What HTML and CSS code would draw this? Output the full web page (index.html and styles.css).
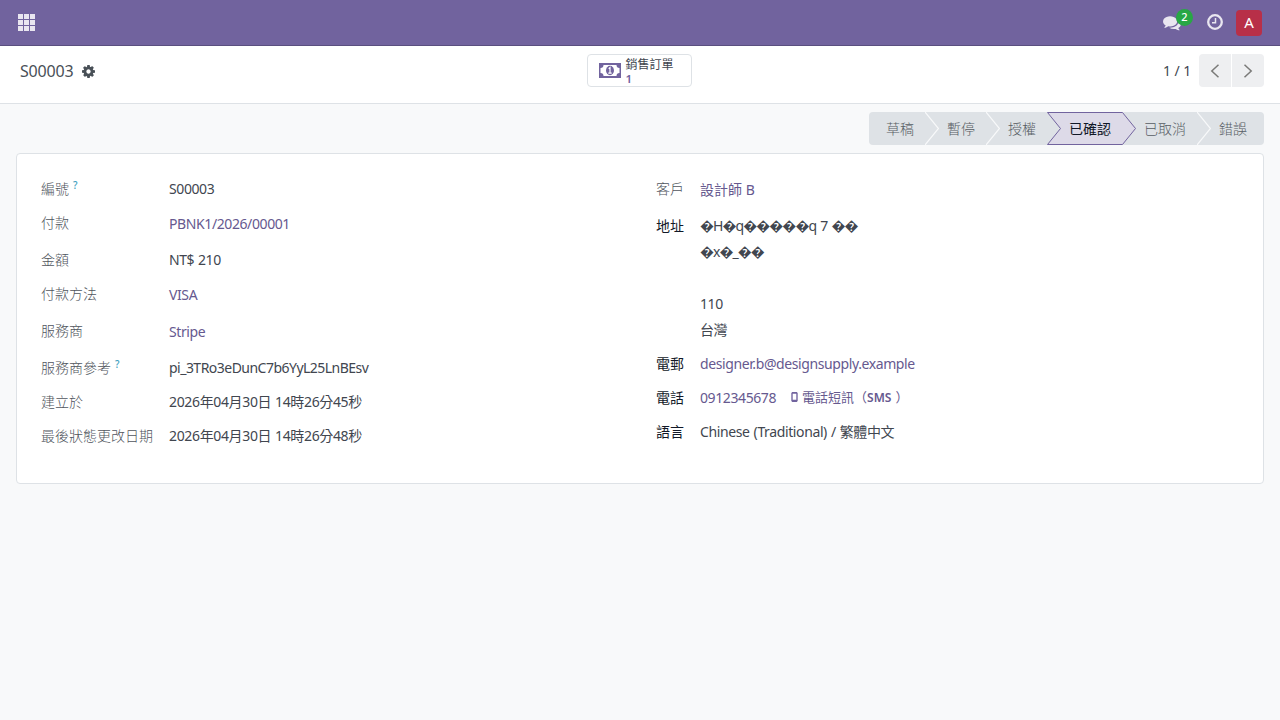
FILE: index.html
```html
<!DOCTYPE html>
<html lang="zh-TW">

<head>
    <meta charset="UTF-8">
    <meta name="viewport" content="width=device-width, initial-scale=1.0">
    <title>S00003</title>
    <link rel="stylesheet" href="styles.css">
</head>

<body>
    <header class="navbar">
        <svg class="apps" width="17" height="17" viewBox="0 0 17 17" fill="#e9e6f0">
            <path d="M0 0h5v5H0zM6 0h5v5H6zM12 0h5v5h-5zM0 6h5v5H0zM6 6h5v5H6zM12 6h5v5h-5zM0 12h5v5H0zM6 12h5v5H6zM12 12h5v5h-5z"/>
        </svg>
        <div class="systray">
            <div class="messages">
                <svg width="18" height="16" viewBox="0 0 1792 1600" fill="#e9e6f0">
                    <path d="M1408 640q0 139-94 257t-256.500 186.500-353.500 68.500q-86 0-176-16-124 88-278 128-36 9-86 16h-3q-11 0-20.500-8t-11.500-21q-1-3-1-6.500t.5-6.500 2-6l2.500-5 3.500-5.500 4-5 4.500-5 4-4.500q5-6 23-25t26-29.500 22.500-29 25-38.500 20.500-44q-124-72-195-177t-71-224q0-139 94-257t256.500-186.500 353.500-68.500 353.500 68.500 256.500 186.500 94 257zm384 256q0 120-71 224.500t-195 176.500q10 24 20.500 44t25 38.500 22.500 29 26 29.500 23 25q1 1 4 4.500t4.500 5 4 5 3.500 5.500l2.500 5 2 6 .5 6.500-1 6.500q-3 14-13 22t-22 7q-50-7-86-16-154-40-278-128-90 16-176 16-271 0-472-132 58 4 88 4 161 0 309-45t264-129q125-92 192-212t67-254q0-77-23-152 129 71 204 178t75 230z"/>
                </svg>
                <span class="badge">2</span>
            </div>
            <svg class="clock" width="16" height="16" viewBox="0 0 16 16" fill="none" stroke="#e9e6f0">
                <circle cx="8" cy="8" r="6.800" stroke-width="2.300"/>
                <path d="M8.500 4v4.700H5" stroke-width="1.500"/>
            </svg>
            <span class="avatar">A</span>
        </div>
    </header>

    <div class="control-panel">
        <div class="breadcrumb">
            <span>S00003</span>
            <svg width="13" height="13" viewBox="0 0 1536 1536" fill="#495057">
                <path d="M1024 768q0-106-75-181t-181-75-181 75-75 181 75 181 181 75 181-75 75-181zm512-109v222q0 12-8 23t-20 13l-185 28q-19 54-39 91 35 50 107 138 10 12 10 25t-9 23q-27 37-99 108t-94 71q-12 0-26-9l-138-108q-44 23-91 38-16 136-29 186-7 28-36 28h-222q-14 0-24.500-8.500t-11.500-21.500l-28-184q-49-16-90-37l-141 107q-10 9-25 9-14 0-25-11-126-114-165-168-7-10-7-23 0-12 8-23 15-21 51-66.500t54-70.500q-27-50-41-99l-183-27q-13-2-21-12.500t-8-23.500v-222q0-12 8-23t19-13l186-28q14-46 39-92-40-57-107-138-10-12-10-24 0-10 9-23 26-36 98.500-107.500t94.500-71.500q13 0 26 10l138 107q44-23 91-38 16-136 29-186 7-28 36-28h222q14 0 24.500 8.500t11.500 21.500l28 184q49 16 90 37l142-107q9-9 24-9 13 0 25 10 129 119 165 170 7 8 7 22 0 12-8 23-15 21-51 66.500t-54 70.500q26 50 41 98l183 28q13 2 21 12.500t8 23.500z"/>
            </svg>
        </div>
        <button class="stat-button">
            <svg width="22" height="15" viewBox="0 0 22 15">
                <path fill="#71639e" fill-rule="evenodd" d="M0 0h22v15H0zM4.500 2a3 3 0 0 1-3 3v5a3 3 0 0 1 3 3h13a3 3 0 0 1 3-3V5a3 3 0 0 1-3-3z"/>
                <ellipse cx="11" cy="7.500" rx="4" ry="4.700" fill="#71639e"/>
                <path d="M9.700 5.800l1.300-1.200v5.200M9.300 10.100h3.400" fill="none" stroke="#fff" stroke-width="1.200"/>
            </svg>
            <span class="stat-text"><span>銷售訂單</span><b>1</b></span>
        </button>
        <div class="pager">
            <span>1 / 1</span>
            <div class="pager-buttons">
                <button><svg width="10" height="14" viewBox="0 0 10 14"><path d="M8.500 .8L1.800 7l6.700 6.200"/></svg></button>
                <button><svg width="10" height="14" viewBox="0 0 10 14"><path d="M1.500 .8L8.200 7l-6.700 6.200"/></svg></button>
            </div>
        </div>
    </div>

    <main class="content">
        <div class="statusbar">
            <span class="step first">草稿</span>
            <svg class="arrow" viewBox="0 0 14 33"><path class="seam" d="M0 0l13.500 16.500L0 33"/></svg>
            <span class="step">暫停</span>
            <svg class="arrow" viewBox="0 0 14 33"><path class="seam" d="M0 0l13.500 16.500L0 33"/></svg>
            <span class="step">授權</span>
            <svg class="arrow" viewBox="0 0 14 33"><path class="fill" d="M0 0h14v33H0l13.500-16.500z"/><path class="edge" d="M14 .5H.5l13 16L.5 32.500H14"/></svg>
            <span class="step active">已確認</span>
            <svg class="arrow" viewBox="0 0 14 33"><path class="fill" d="M0 0l13.500 16.500L0 33z"/><path class="edge" d="M0 .5h.5l13 16-13 16H0"/></svg>
            <span class="step">已取消</span>
            <svg class="arrow" viewBox="0 0 14 33"><path class="seam" d="M0 0l13.500 16.500L0 33"/></svg>
            <span class="step last">錯誤</span>
        </div>

        <div class="sheet">
            <div class="group group-left">
                <label>編號<sup>?</sup></label>
                <span>S00003</span>
                <label class="up">付款</label>
                <a href="#">PBNK1/2026/00001</a>
                <label>金額</label>
                <span>NT$ 210</span>
                <label class="up">付款方法</label>
                <a href="#">VISA</a>
                <label>服務商</label>
                <a href="#" class="down">Stripe</a>
                <label>服務商參考<sup>?</sup></label>
                <span class="reference">pi_3TRo3eDunC7b6YyL25LnBEsv</span>
                <label>建立於</label>
                <span class="date">2026年04月30日 14時26分45秒</span>
                <label>最後狀態更改日期</label>
                <span class="date">2026年04月30日 14時26分48秒</span>
            </div>
            <div class="group group-right">
                <label class="up">客戶</label>
                <a href="#" class="partner">設計師 B</a>
                <label class="dark top">地址</label>
                <div class="address">
                    <div class="garbled">�H�q�����q 7 ��</div>
                    <div class="garbled">�x�_��</div>
                    <div></div>
                    <div>110</div>
                    <div>台灣</div>
                </div>
                <label class="dark">電郵</label>
                <a href="#">designer.b@designsupply.example</a>
                <label class="dark">電話</label>
                <div class="phone">
                    <a href="#">0912345678</a>
                    <a href="#" class="sms">
                        <svg width="7" height="10" viewBox="0 0 7 11"><path fill="#71639e" fill-rule="evenodd" d="M1 0h5l1 1v9l-1 1H1l-1-1V1zM1.500 1.800v6.700h4V1.800z"/></svg>
                        <span>電話短訊（<b>SMS</b>）</span>
                    </a>
                </div>
                <label class="dark">語言</label>
                <span class="language">Chinese (Traditional) / 繁體中文</span>
            </div>
        </div>
    </main>
</body>

</html>
```
FILE: styles.css
```css
* {
    box-sizing: border-box;
}

body {
    margin: 0;
    height: 100vh;
    background-color: #f8f9fa;
    color: #41464f;
    font-family: 'Noto Sans', 'Noto Sans CJK TC', sans-serif;
    font-size: 14px;
    line-height: 21px;
    letter-spacing: -0.4px;
    word-spacing: 0.5px;
}

a {
    color: #66598f;
    text-decoration: none;
}

button {
    font: inherit;
    letter-spacing: inherit;
    color: inherit;
    padding: 0;
    cursor: pointer;
}

svg {
    flex: none;
    display: block;
}

.navbar {
    height: 46px;
    padding: 0 18px;
    display: flex;
    align-items: center;
    justify-content: space-between;
    background-color: #71639e;
    border-bottom: 1px solid #5a4f7f;
}

.systray {
    display: flex;
    align-items: center;
}

.messages {
    position: relative;
    margin-right: 26px;
}

.badge {
    position: absolute;
    left: 13px;
    top: -6px;
    width: 17px;
    height: 17px;
    border-radius: 50%;
    background-color: #28a745;
    color: #fff;
    font-size: 11px;
    font-weight: 500;
    line-height: 16px;
    letter-spacing: 0;
    text-align: center;
}

.clock {
    margin-top: -2px;
    margin-right: 13px;
}

.avatar {
    width: 26px;
    height: 26px;
    border-radius: 4px;
    background-color: #b82f48;
    color: #fff;
    font-size: 15px;
    line-height: 25px;
    letter-spacing: 0;
    text-align: center;
}

.control-panel {
    height: 58px;
    padding: 8px 16px 16px 20px;
    display: grid;
    grid-template-columns: 1fr 105px 1fr;
    background-color: #fff;
    border-bottom: 1px solid #dee2e6;
}

.breadcrumb {
    display: flex;
    align-items: center;
    gap: 9px;
    padding-top: 1px;
    font-size: 16px;
    letter-spacing: -0.2px;
    color: #495057;
}

.stat-button {
    width: 105px;
    height: 33px;
    padding-left: 11px;
    display: flex;
    align-items: center;
    gap: 5px;
    background-color: #fff;
    border: 1px solid #dee2e6;
    border-radius: 4px;
    margin-left: -3px;
}

.stat-text {
    display: flex;
    flex-direction: column;
    padding-top: 2px;
    font-size: 12px;
    line-height: 14px;
    letter-spacing: 0;
    text-align: left;
}

.stat-text b {
    font-size: 11.5px;
    font-weight: 600;
    color: #71639e;
}

.pager {
    display: flex;
    align-items: center;
    justify-content: flex-end;
    gap: 8px;
    letter-spacing: -0.3px;
}

.pager-buttons {
    display: flex;
    gap: 1px;
}

.pager-buttons button {
    width: 32px;
    height: 33px;
    display: flex;
    align-items: center;
    justify-content: center;
    border: 0;
    background-color: #eeeff1;
}

.pager-buttons button:first-child {
    border-radius: 4px 0 0 4px;
}

.pager-buttons button:last-child {
    border-radius: 0 4px 4px 0;
}

.pager-buttons path {
    fill: none;
    stroke: #7a7a78;
    stroke-width: 1.5;
}

.content {
    padding: 8px 16px;
}

.statusbar {
    width: 395px;
    height: 33px;
    margin-left: auto;
    display: flex;
    background-color: #dee2e6;
    border-radius: 4px;
    color: #565c63;
    font-weight: 300;
    letter-spacing: 0;
}

.step {
    flex: 0 0 47px;
    height: 33px;
    padding-left: 8px;
    line-height: 33px;
    white-space: nowrap;
}

.step.first {
    flex-basis: 56px;
    padding-left: 17px;
}

.step.active {
    flex-basis: 61px;
    background-color: #dddae8;
    border: solid #71639e;
    border-width: 1px 0;
    line-height: 31px;
    font-weight: 400;
    color: #111827;
}

.step.active ~ .step {
    flex-basis: 61px;
}

.step.last {
    flex: 1;
}

.arrow {
    width: 14px;
    height: 33px;
}

.arrow .seam {
    fill: none;
    stroke: #f8f9fa;
    stroke-width: 1.2;
}

.arrow .fill {
    fill: #dddae8;
}

.arrow .edge {
    fill: none;
    stroke: #71639e;
    stroke-width: 1;
}

.sheet {
    height: 331px;
    margin-top: 8px;
    padding: 17px 24px;
    display: grid;
    grid-template-columns: 615px 1fr;
    background-color: #fff;
    border: 1px solid #dee2e6;
    border-radius: 4px;
}

.group {
    display: grid;
    align-items: center;
    align-content: start;
}

.group-left {
    grid-template-columns: 128px 1fr;
    grid-template-rows: 34px 36px 36px 35px 37px 36px 33px 34px;
}

.group-right {
    grid-template-columns: 44px 1fr;
    grid-template-rows: 36px 140px 33px 34px 34px;
}

label {
    color: #50555d;
    font-weight: 300;
    letter-spacing: 0;
}

label.up {
    padding-bottom: 2px;
}

label.dark {
    color: #111827;
    font-weight: 400;
}

label.top {
    align-self: start;
    padding-top: 8px;
}

sup {
    margin-left: 4px;
    font-size: 10px;
    line-height: 0;
    vertical-align: 5px;
    font-weight: 500;
    color: #3f9fc0;
}

.down {
    padding-top: 1px;
}

.reference {
    letter-spacing: -0.52px;
}

.date {
    letter-spacing: -0.35px;
}

.partner {
    letter-spacing: 0;
    word-spacing: 0;
}

.address {
    padding-top: 2px;
    line-height: 26px;
}

.address div {
    height: 26px;
}

.garbled {
    letter-spacing: -0.95px;
    word-spacing: 1.5px;
}

.phone {
    display: flex;
    align-items: center;
    gap: 15px;
}

.sms {
    display: flex;
    align-items: center;
    gap: 4px;
    font-size: 13px;
    letter-spacing: 0;
}

.sms b {
    margin-right: 4px;
    font-size: 12px;
    font-weight: 600;
}

.language {
    letter-spacing: -0.38px;
    word-spacing: 0.7px;
}
```
